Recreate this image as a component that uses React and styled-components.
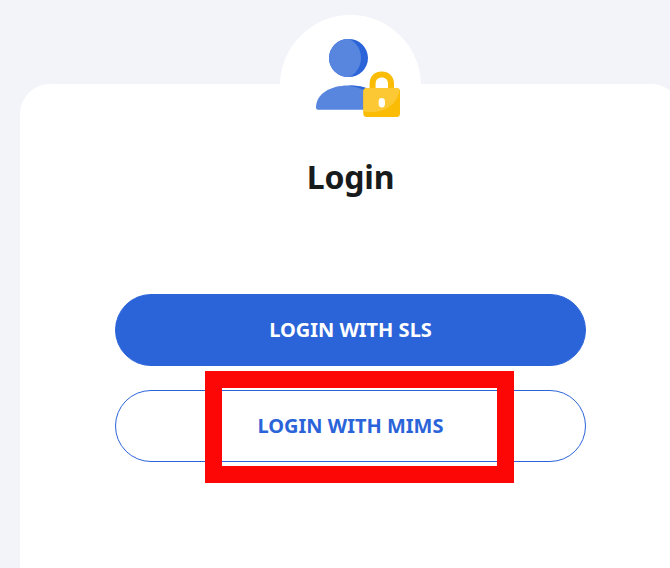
import React from "react";
import styled, { createGlobalStyle } from "styled-components";

const GlobalStyle = createGlobalStyle`
  *, *::before, *::after { box-sizing: border-box; }
  body {
    margin: 0;
    overflow: hidden;
    background: #f3f4f9;
    font-family: "Noto Sans", "Open Sans", sans-serif;
  }
`;

const Page = styled.main`
  width: 701px;
  height: 568px;
  padding: 84px 20px 0;
  overflow: hidden;
  display: flex;
`;

const Card = styled.section`
  flex: 1;
  display: flex;
  flex-direction: column;
  align-items: center;
  background: #fff;
  border-radius: 30px 30px 0 0;
`;

const Avatar = styled.div`
  width: 141px;
  height: 141px;
  margin-top: -69px;
  flex: none;
  border-radius: 50%;
  background: #fff;

  svg { display: block; }
`;

const Title = styled.h1`
  margin: -1px 0 0;
  height: 44px;
  line-height: 44px;
  font-size: 32px;
  font-weight: 700;
  letter-spacing: -0.2px;
  color: #181b1c;
`;

const Actions = styled.div`
  width: 471px;
  margin-top: 95px;
  display: flex;
  flex-direction: column;
  gap: 24px;
`;

const ButtonSlot = styled.div`
  position: relative;
  display: flex;
`;

const LoginButton = styled.button`
  flex: 1;
  height: 72px;
  padding: 0;
  border: 1px solid #2b64d9;
  border-radius: 36px;
  background: ${({ $filled }) => ($filled ? "#2b64d9" : "#fff")};
  color: ${({ $filled }) => ($filled ? "#fff" : "#2b64d9")};
  font: 700 20px/28px "Noto Sans", "Open Sans", sans-serif;
`;

const Highlight = styled.div`
  position: absolute;
  left: 90px;
  top: -19px;
  width: 309px;
  height: 112px;
  border: 17px solid #fc0606;
  pointer-events: none;
`;

function UserLockIcon() {
  return (
    <svg width="141" height="141" viewBox="280 15 141 141" aria-hidden="true">
      <defs>
        <clipPath id="head"><ellipse cx="348.5" cy="58" rx="19.5" ry="19.1" /></clipPath>
        <clipPath id="lock"><rect x="363.3" y="88" width="36.7" height="29" rx="3.5" /></clipPath>
      </defs>
      <ellipse cx="348.5" cy="58" rx="19.5" ry="19.1" fill="#2b64d9" />
      <ellipse cx="342" cy="58" rx="19" ry="20.5" fill="#5886df" clipPath="url(#head)" />
      <path d="M316 107.5C316 94 330 85.5 348 85.5C360 85.5 370 88 377 95V109.7H318Q316 109.7 316 107.5Z" fill="#5886df" />
      <path d="M348 85.5C357 85.3 365 86.5 371 90H364Q357 86.5 348 85.5Z" fill="#2b64d9" />
      <path d="M369.6 89V83.5C369.6 76 374.8 71.4 381.7 71.4S394 76 394 83.5V89H388V83.5C388 79.5 385.4 77.4 381.8 77.4S375.6 79.5 375.6 83.5V89Z" fill="#fbbc05" />
      <rect x="363.3" y="88" width="36.7" height="29" rx="3.5" fill="#fbbc05" />
      <path d="M363 87H400C399 101 389 112 371 112Q366 112 363 111Z" fill="#fcc934" clipPath="url(#lock)" />
      <rect x="378.7" y="98" width="6.2" height="9.4" rx="3.1" fill="#fff" />
    </svg>
  );
}

export default function App() {
  return (
    <>
      <GlobalStyle />
      <Page>
        <Card>
          <Avatar><UserLockIcon /></Avatar>
          <Title>Login</Title>
          <Actions>
            <ButtonSlot>
              <LoginButton $filled>LOGIN WITH SLS</LoginButton>
            </ButtonSlot>
            <ButtonSlot>
              <LoginButton>LOGIN WITH MIMS</LoginButton>
              <Highlight />
            </ButtonSlot>
          </Actions>
        </Card>
      </Page>
    </>
  );
}
